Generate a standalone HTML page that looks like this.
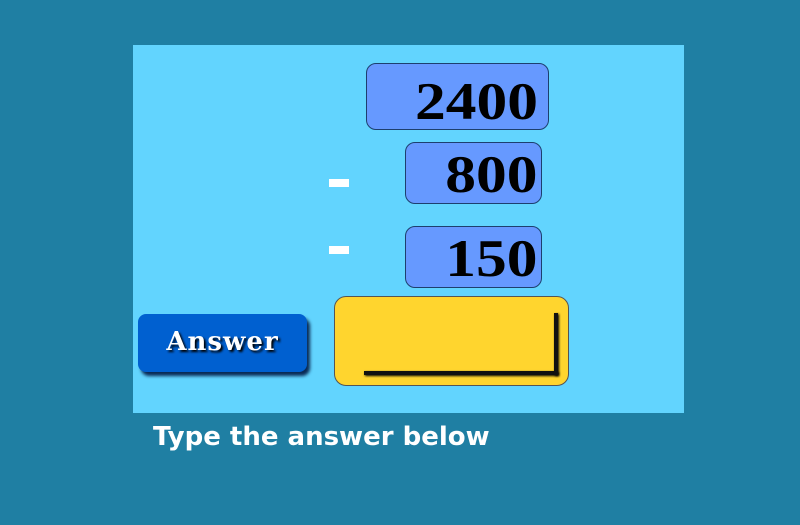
<!DOCTYPE html>
<html><head><style>
body{margin:0;width:800px;height:525px;background:#1f7fa3;position:relative;overflow:hidden;font-family:"Liberation Sans",sans-serif}
.p{position:absolute;left:133px;top:45px;width:551px;height:368px;background:#62d4fe}
.b{position:absolute;background:#6699ff;border:1px solid #1d3f6e;border-radius:10px;box-sizing:border-box}
.b span{position:absolute;right:10px;font-family:"Liberation Serif",serif;font-weight:bold;font-size:53px;color:#000;line-height:1;transform:scaleX(1.16);transform-origin:right center}
.m{position:absolute;left:329px;width:20px;height:8px;background:#fff}
</style></head><body>
<div class="p"></div>
<div class="b" style="left:366px;top:63px;width:183px;height:67px"><span style="top:12px">2400</span></div>
<div class="b" style="left:405px;top:142px;width:137px;height:62px"><span style="top:6px;right:4px">800</span></div>
<div class="b" style="left:405px;top:226px;width:137px;height:62px"><span style="top:6px;right:4px">150</span></div>
<div class="m" style="top:179px"></div>
<div class="m" style="top:246px"></div>
<div style="position:absolute;left:138px;top:314px;width:169px;height:58px;background:#0060d0;border-radius:8px;box-shadow:3px 4px 3px #0a2a55"></div>
<div style="position:absolute;left:138px;top:327px;width:169px;text-align:center;color:#fff;font-family:'DejaVu Serif',serif;font-weight:bold;font-size:26px;letter-spacing:1px;text-shadow:2px 2px 2px #000">Answer</div>
<div style="position:absolute;left:334px;top:296px;width:235px;height:90px;background:#ffd52e;border:1px solid #555;border-radius:12px;box-sizing:border-box"></div>
<div style="position:absolute;left:364px;top:371px;width:194px;height:4px;background:#111;box-shadow:1px 1px 2px #000"></div>
<div style="position:absolute;left:554px;top:313px;width:4px;height:62px;background:#111;box-shadow:1px 1px 2px #000"></div>
<div style="position:absolute;left:153px;top:422px;color:#fff;font-family:'DejaVu Sans',sans-serif;font-weight:bold;font-size:26px">Type the answer below</div>
</body></html>
